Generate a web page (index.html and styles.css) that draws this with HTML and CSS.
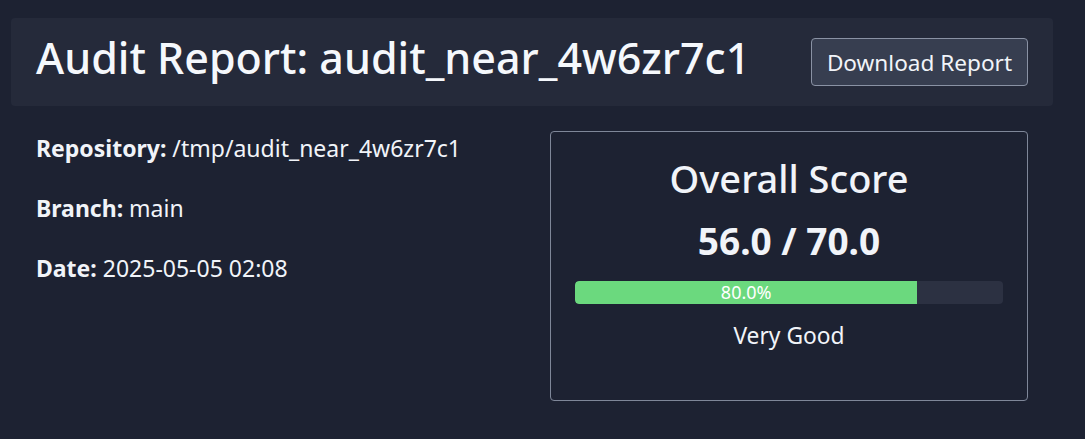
FILE: index.html
```html
<!DOCTYPE html>
<html>
<head>
<meta charset="utf-8">
<link rel="stylesheet" href="styles.css">
</head>
<body>
<div class="page">
  <header class="header">
    <h1 class="title">Audit Report: audit_near_4w6zr7c1</h1>
    <button class="btn">Download Report</button>
  </header>
  <main class="content">
    <section class="meta">
      <p><strong>Repository:</strong> /tmp/audit_near_4w6zr7c1</p>
      <p><strong>Branch:</strong> main</p>
      <p><strong>Date:</strong> 2025-05-05 02:08</p>
    </section>
    <section class="score-card">
      <h2 class="score-title">Overall Score</h2>
      <div class="score-value">56.0 / 70.0</div>
      <div class="bar"><div class="bar-fill" style="width:80%">80.0%</div></div>
      <div class="rating">Very Good</div>
    </section>
  </main>
</div>
</body>
</html>
```

FILE: styles.css
```css
html, body {
  margin: 0;
  padding: 0;
  background: #1d2232;
  color: #f1f4f9;
  font-family: "Noto Sans", "Open Sans", sans-serif;
}
.page {
  padding: 18px 32px 0 11px;
}
.header {
  display: flex;
  align-items: center;
  justify-content: space-between;
  background: #252a3a;
  border-radius: 4px;
  height: 88px;
  padding: 0 25px 0 25px;
  box-sizing: border-box;
}
.title {
  margin: 0 0 8px 0;
  font-size: 43px;
  font-weight: 500;
  line-height: 56px;
  color: #f5f8fc;
}
.btn {
  background: #373e50;
  color: #f1f4f9;
  border: 1px solid #8a92a4;
  border-radius: 4px;
  font-family: inherit;
  font-size: 22.6px;
  height: 48px;
  width: 217px;
  padding: 0;
}
.content {
  display: flex;
  justify-content: space-between;
  padding: 25px 25px 0 25px;
}
.meta p {
  margin: 0 0 28px 0;
  font-size: 23px;
  line-height: 32px;
}
.meta p:first-child { margin-top: 1px; }
.meta strong { font-weight: 700; }
.score-card {
  width: 478px;
  height: 270px;
  box-sizing: border-box;
  border: 1px solid #7f8799;
  border-radius: 4px;
  padding: 22px 24px;
  text-align: center;
}
.score-title {
  margin: 0;
  font-size: 38px;
  font-weight: 500;
  line-height: 48px;
}
.score-value {
  margin-top: 17px;
  font-size: 37px;
  font-weight: 700;
  line-height: 44px;
}
.bar {
  margin-top: 18px;
  height: 23px;
  background: #2c3142;
  border-radius: 4px;
  overflow: hidden;
}
.bar-fill {
  height: 100%;
  background: #6bd97e;
  color: #fff;
  font-size: 18px;
  line-height: 23px;
  border-radius: 4px 0 0 4px;
}
.rating {
  margin-top: 17px;
  font-size: 22.8px;
  line-height: 30px;
}
```
